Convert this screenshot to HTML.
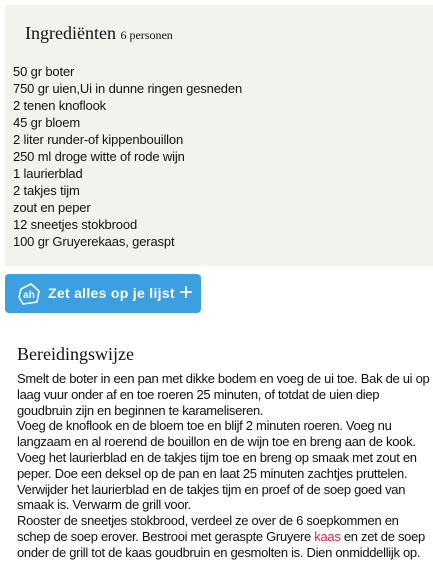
<!DOCTYPE html>
<html><head><meta charset="utf-8"><style>
body{margin:0;width:433px;height:573px;background:#fff;font-family:"Liberation Sans",sans-serif;color:#111;overflow:hidden;position:relative}
.box{position:absolute;left:5px;top:5px;width:428px;height:261px;background:#f3f3ee}
h2{font-family:"Liberation Serif",serif;font-weight:normal;font-size:18px;margin:0;position:absolute}
h2 small{font-size:12px}
.ing{position:absolute;left:13px;top:63px;font-size:13px;line-height:17px;letter-spacing:-0.15px}
.btn{position:absolute;left:5px;top:274px;width:196px;height:39px;background:#3b9fe0;border-radius:4px;color:#fff;font-weight:bold;font-size:14px}
.txt{position:absolute;left:17px;top:371px;width:414px;font-size:13px;line-height:15.8px;letter-spacing:-0.3px}
.txt a{color:#d0303a;text-decoration:none}
</style></head><body>
<div class="box"></div>
<h2 style="left:25px;top:23px">Ingrediënten <small>6 personen</small></h2>
<div class="ing">50 gr boter<br>750 gr uien,Ui in dunne ringen gesneden<br>2 tenen knoflook<br>45 gr bloem<br>2 liter runder-of kippenbouillon<br>250 ml droge witte of rode wijn<br>1 laurierblad<br>2 takjes tijm<br>zout en peper<br>12 sneetjes stokbrood<br>100 gr Gruyerekaas, geraspt</div>
<div class="btn">
<svg style="position:absolute;left:12px;top:9px" width="24" height="22" viewBox="0 0 24 22"><path d="M4 6 L14 1 L22 8 L20 19 L6 21 L2 14 Z" fill="#3b9fe0" stroke="#fff" stroke-width="1.6"/><text x="12" y="15" font-size="10" font-weight="bold" fill="#fff" text-anchor="middle" font-family="Liberation Sans">ah</text></svg>
<span style="position:absolute;left:43px;top:11px;letter-spacing:0.3px">Zet alles op je lijst</span>
<span style="position:absolute;left:174px;top:5px;font-size:24px;font-weight:normal">+</span>
</div>
<h2 style="left:17px;top:344px">Bereidingswijze</h2>
<div class="txt">Smelt de boter in een pan met dikke bodem en voeg de ui toe. Bak de ui op laag vuur onder af en toe roeren 25 minuten, of totdat de uien diep goudbruin zijn en beginnen te karameliseren.<br>Voeg de knoflook en de bloem toe en blijf 2 minuten roeren. Voeg nu langzaam en al roerend de bouillon en de wijn toe en breng aan de kook. Voeg het laurierblad en de takjes tijm toe en breng op smaak met zout en peper. Doe een deksel op de pan en laat 25 minuten zachtjes pruttelen. Verwijder het laurierblad en de takjes tijm en proef of de soep goed van smaak is. Verwarm de grill voor.<br>Rooster de sneetjes stokbrood, verdeel ze over de 6 soepkommen en schep de soep erover. Bestrooi met geraspte Gruyere <a>kaas</a> en zet de soep onder de grill tot de kaas goudbruin en gesmolten is. Dien onmiddellijk op.</div>
</body></html>
